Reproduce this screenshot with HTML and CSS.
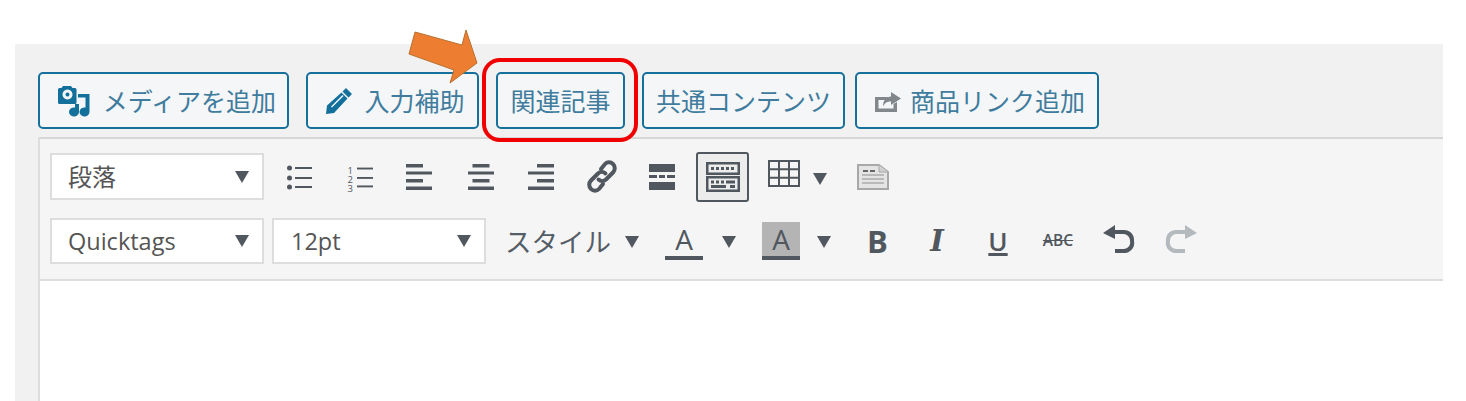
FILE: index.html
```html
<!DOCTYPE html>
<html lang="ja">
<head>
<meta charset="utf-8">
<title>エディタ</title>
<link rel="stylesheet" href="styles.css">
</head>
<body>
<div class="wrap">
  <div class="media-buttons">
    <button class="mbtn w-media">
      <svg class="ic-media" viewBox="0 0 32 33"><path class="fill-blue" fill-rule="evenodd" d="M5 2h8l1.500 2H17a1.500 1.500 0 0 1 1.500 1.500v13a1.500 1.500 0 0 1-1.500 1.500H1.500A1.500 1.500 0 0 1 0 18.500v-13A1.500 1.500 0 0 1 1.500 4H3.500zM9.500 5.500a5 5 0 1 0 .01 0zM9.500 8.500a2 2 0 1 1-.01 0z"/><path class="fill-blue" d="M20 10h11.500v18a5 4.500 0 1 1-4-4.400V13.500H20zM17 20h4v8a5 4.500 0 1 1-4-4.400z"/></svg>
      <span>メディアを追加</span>
    </button>
    <button class="mbtn w-input">
      <svg class="ic-pencil" viewBox="0 0 26 26"><path class="fill-blue" fill-rule="evenodd" d="M20 0l6 6-3.500 3.500-6-6zM15.500 4.500l6 6L8 25 0 26l1-8.500zM5 18.500L16.500 7l1 1L6 19.500z"/></svg>
      <span>入力補助</span>
    </button>
    <button class="mbtn w-rel">関連記事</button>
    <button class="mbtn w-common">共通コンテンツ</button>
    <button class="mbtn w-link">
      <svg class="ic-share" viewBox="0 0 26 20"><path class="fill-grey" d="M0 5h13v3H3.500v8.500h15V12l3.500-2v10H0z"/><path class="fill-grey" d="M16 0l10 6.500-10 6.500V9.500c-4 0-6 1-8 5 0-6 3-9.500 8-10z"/></svg>
      <span>商品リンク追加</span>
    </button>
  </div>
  <div class="editor">
    <div class="toolbar">
      <div class="row">
        <div class="sel w-sel"><span class="sel-text up">段落</span><i class="caret"></i></div>
        <div class="icons">
          <span class="cell shift-r"><svg class="ic26" viewBox="0 0 26 26"><g class="fill-ink"><circle cx="2.500" cy="4" r="2.500"/><circle cx="2.500" cy="14" r="2.500"/><circle cx="2.500" cy="23" r="2.500"/><rect x="8" y="3" width="17" height="2"/><rect x="8" y="13" width="17" height="2"/><rect x="8" y="22" width="17" height="2"/></g></svg></span>
          <span class="cell"><span class="numlist"><span class="nums">123</span><svg class="ic-lines" viewBox="0 0 17 26"><g class="fill-ink"><rect x="0" y="3" width="17" height="2"/><rect x="0" y="13" width="17" height="2"/><rect x="0" y="22" width="17" height="2"/></g></svg></span></span>
          <span class="cell shift-l"><svg class="ic26" viewBox="0 0 26 26"><g class="fill-ink"><rect y="0" width="17" height="3.500"/><rect y="7.500" width="26" height="3"/><rect y="15" width="17" height="3.500"/><rect y="22.500" width="26" height="3.500"/></g></svg></span>
          <span class="cell"><svg class="ic26" viewBox="0 0 26 26"><g class="fill-ink"><rect x="4.500" y="0" width="17" height="3.500"/><rect y="7.500" width="26" height="3"/><rect x="4.500" y="15" width="17" height="3.500"/><rect y="22.500" width="26" height="3.500"/></g></svg></span>
          <span class="cell"><svg class="ic26" viewBox="0 0 26 26"><g class="fill-ink"><rect x="9" y="0" width="17" height="3.500"/><rect y="7.500" width="26" height="3"/><rect x="9" y="15" width="17" height="3.500"/><rect y="22.500" width="26" height="3.500"/></g></svg></span>
          <span class="cell"><svg class="ic-link" viewBox="0 0 32 33"><g fill="none" class="stroke-ink" stroke-width="4" stroke-linecap="round"><path d="M15 9l4-5a5.500 5.500 0 0 1 8 0 6 6 0 0 1 0 8.500l-7 7a5.500 5.500 0 0 1-7.500 0"/><path d="M17 24l-4 5a5.500 5.500 0 0 1-8 0 6 6 0 0 1 0-8.500l7-7a5.500 5.500 0 0 1 7.500 0"/></g></svg></span>
          <span class="cell"><svg class="ic26" viewBox="0 0 26 26"><g class="fill-ink"><rect y="0" width="26" height="8"/><rect y="11" width="8" height="3"/><rect x="10" y="11" width="6" height="3"/><rect x="18" y="11" width="8" height="3"/><rect y="18" width="26" height="8"/></g></svg></span>
          <span class="cell"><span class="active-box"><svg class="ic-kitchen" viewBox="0 0 34 30"><g fill="none" class="stroke-ink" stroke-width="2.500"><rect x="1.250" y="1.250" width="31.500" height="10.500"/><rect x="1.250" y="15.250" width="31.500" height="13.500"/></g><g class="fill-ink"><rect x="5" y="5" width="3" height="3"/><rect x="10" y="5" width="3" height="3"/><rect x="15" y="5" width="3" height="3"/><rect x="20" y="5" width="3" height="3"/><rect x="25" y="5" width="3" height="3"/><rect x="5" y="18.500" width="3" height="3"/><rect x="10" y="18.500" width="3" height="3"/><rect x="15" y="18.500" width="3" height="3"/><rect x="20" y="18.500" width="9" height="3"/><rect x="5" y="23" width="15" height="3"/><rect x="24" y="23" width="5" height="3"/></g></svg></span></span>
          <span class="table-group"><svg class="ic-table" viewBox="0 0 32 27"><path class="stroke-ink" fill="none" stroke-width="2" d="M1 1h30v25H1zM1 9.300h30M1 17.700h30M11 1v25M21 1v25"/></svg><i class="caret"></i></span>
          <svg class="ic-paste" viewBox="0 0 32 26"><path d="M1 1h21l9 7v17H1z" fill="#e4e4e4" stroke="#a8a8a8" stroke-width="2"/><path d="M22 1v7h9" fill="#d0d0d0" stroke="#a8a8a8"/><path d="M5 11h22M5 15h22M5 19h22" stroke="#b9b9b9" stroke-width="2"/><path d="M6 7h5M13 7h5" stroke="#666" stroke-width="2"/></svg>
        </div>
      </div>
      <div class="row row2">
        <div class="sel w-sel latin"><span class="sel-text down">Quicktags</span><i class="caret"></i></div>
        <div class="sel w-sel latin"><span class="sel-text down size">12pt</span><i class="caret"></i></div>
        <span class="style-lbl">スタイル</span><i class="caret c-style"></i>
        <span class="color-a"><span class="a-char">A</span></span><i class="caret c-fore"></i>
        <span class="color-a hl"><span class="a-char">A</span></span><i class="caret c-back"></i>
        <span class="fmt b">B</span>
        <span class="fmt i">I</span>
        <span class="fmt u">U</span>
        <span class="fmt s">ABC</span>
        <svg class="ic-undo" viewBox="0 0 32 28"><path class="fill-ink" d="M0 8L12 0v5h8a10 10 0 0 1 11 11 10 10 0 0 1-11 12h-8v-4h8a6.500 6.500 0 0 0 7-8 6.500 6.500 0 0 0-7-7h-8v5z"/></svg>
        <svg class="ic-redo" viewBox="0 0 32 28"><path class="fill-off" d="M32 8L20 0v5h-8A10 10 0 0 0 1 16a10 10 0 0 0 11 12h8v-4h-8a6.500 6.500 0 0 1-7-8 6.500 6.500 0 0 1 7-7h8v5z"/></svg>
      </div>
    </div>
    <div class="content"></div>
  </div>
  <svg class="arrow" viewBox="0 0 80 60"><polygon points="6,3 53,16 57,1 68,34 41,54 45,41 0,25" fill="#ed7d31" stroke="#b9702f" stroke-width="1"/></svg>
  <div class="redbox"></div>
</div>
</body>
</html>
```
FILE: styles.css
```css
* { box-sizing: border-box; }
html, body { margin: 0; padding: 0; height: 401px; overflow: hidden; background: #fff; }
body { font-family: "Noto Sans CJK JP", "Open Sans", sans-serif; padding: 44px 23px 0 15px; }

.wrap { position: relative; height: 357px; background: #f1f1f1; display: flex; flex-direction: column; }

.media-buttons { display: flex; gap: 17px; padding: 28px 0 0 23px; height: 93px; flex: none; }
.mbtn {
  height: 57px; padding: 0; display: flex; align-items: center; justify-content: center;
  background: #f5f6f8; border: 2px solid #15719c; border-radius: 5px;
  color: #3f7c9d; font: 400 25px/1 "Noto Sans CJK JP", sans-serif; flex: none;
}
.w-media { width: 251px; gap: 13px; padding-left: 7px; }
.w-input { width: 173px; gap: 12px; padding-left: 6px; }
.w-rel { width: 129px; }
.w-common { width: 203px; }
.w-link { width: 244px; gap: 9px; margin-left: -7px; padding-left: 6px; }
.ic-media { width: 32px; height: 33px; flex: none; }
.ic-pencil { width: 26px; height: 26px; flex: none; }
.ic-share { width: 26px; height: 20px; margin-top: 3px; flex: none; }
.fill-blue { fill: #12709b; }
.fill-grey { fill: #82878c; }
.fill-ink { fill: #50575e; }
.fill-off { fill: #b4b9be; }
.stroke-ink { stroke: #50575e; }

.editor { flex: 1; margin-left: 23px; border-left: 2px solid #ddd; display: flex; flex-direction: column; }
.toolbar { background: #f5f5f5; border-top: 2px solid #d6d6d6; border-bottom: 2px solid #ddd; padding: 14px 0 15px 10px; flex: none; }
.content { flex: 1; background: #fff; }

.row { display: flex; align-items: center; height: 47px; }
.row2 { margin-top: 18px; height: 46px; }
.sel {
  height: 100%; background: #fff; border: 2px solid #ddd; display: flex; align-items: center;
  justify-content: space-between; padding: 0 13px 0 16px; color: #555;
  font-size: 24px;
}
.w-sel { width: 214px; }
.row2 .sel + .sel { margin-left: 8px; }
.latin { font-family: "Open Sans", sans-serif; font-size: 23.5px; }
.sel-text { line-height: 1; }
.up { margin-top: -2px; }
.down { margin-top: 2px; }
.size { margin-left: 1px; }

.caret { display: block; width: 0; height: 0; border: solid transparent; border-width: 12px 7px 0; border-top-color: #50575e; flex: none; }

.icons { display: flex; align-items: center; padding-left: 5px; }
.cell { width: 60.500px; display: flex; justify-content: center; align-items: center; flex: none; }
.shift-l svg { margin-left: -2px; }
.shift-r svg { margin-left: 2px; }
.ic26 { width: 26px; height: 26px; display: block; }
.ic-link { width: 32px; height: 33px; display: block; }
.numlist { display: flex; align-items: center; gap: 3px; width: 26px; height: 26px; }
.nums {
  writing-mode: vertical-rl; text-orientation: upright; font: 400 9.500px/7px "Open Sans", sans-serif;
  letter-spacing: -4px; color: #50575e; width: 7px; height: 26px; flex: none; display: block; overflow: visible;
}
.ic-lines { width: 16px; height: 26px; display: block; flex: none; }
.active-box { width: 53px; height: 50px; flex: none; display: flex; align-items: center; justify-content: center; border: 2px solid #50575e; border-radius: 3px; background: #ececec; }
.ic-kitchen { width: 34px; height: 30px; display: block; }
.table-group { display: flex; align-items: center; gap: 13px; margin-left: 15px; position: relative; top: -3px; }
.table-group .caret { position: relative; top: 5px; }
.ic-table { width: 32px; height: 27px; display: block; }
.ic-paste { width: 32px; height: 26px; margin-left: 30px; display: block; }

.style-lbl { margin-left: 19px; color: #555d66; font-size: 26.500px; line-height: 1; white-space: nowrap; }
.c-style { margin-left: 14px; margin-top: 2px; }
.color-a {
  display: flex; justify-content: center; align-items: flex-end; width: 38px; height: 38px;
  border-bottom: 4px solid #50575e; color: #50575e; font: 500 28px/34px "Open Sans", sans-serif; margin-left: 26px;
}
.hl { background: #b4b4b4; }
.a-char { display: block; }
.c-fore, .c-back { margin-top: 2px; }
.c-fore { margin-left: 19px; }
.c-back { margin-left: 17px; }
.fmt { color: #50575e; line-height: 1; display: block; text-align: center; flex: none; }
.b { font: 700 31px/1 "Open Sans", sans-serif; width: 20px; margin-left: 36px; }
.i { font: italic 700 29px/1 "DejaVu Serif", serif; width: 20px; margin-left: 40px; }
.u { font: 600 26px/1 "Open Sans", sans-serif; width: 20px; margin-left: 41px; text-decoration: underline; text-decoration-thickness: 3px; text-underline-offset: 2px; }
.s { font: 600 15.500px/1 "Open Sans", sans-serif; width: 32px; margin-left: 34px; text-decoration: line-through; }
.ic-undo { width: 32px; height: 28px; margin-left: 29px; margin-top: -4px; display: block; }
.ic-redo { width: 32px; height: 28px; margin-left: 30px; margin-top: -4px; display: block; }

.arrow { position: absolute; left: 394px; top: -15px; width: 80px; height: 60px; overflow: visible; }
.redbox { position: absolute; left: 467px; top: 14px; width: 156px; height: 84px; border: 4px solid #f00000; border-radius: 18px; }
```
